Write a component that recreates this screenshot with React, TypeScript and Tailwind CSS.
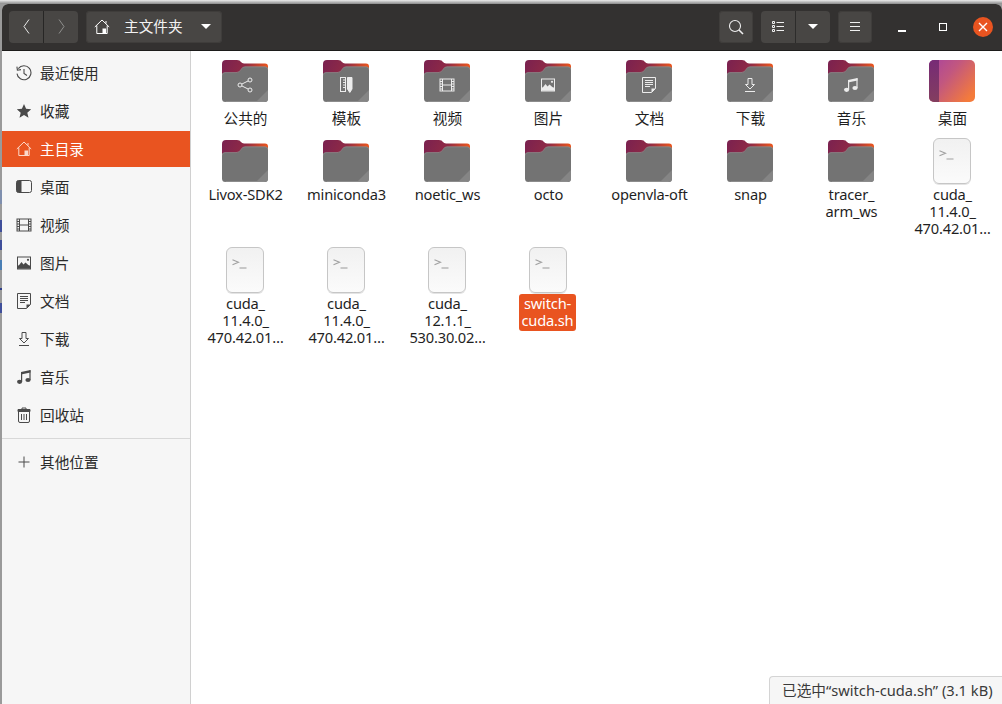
import React from "react";

const G = ({ children, cls = "" }: { children: React.ReactNode; cls?: string }) => (
  <svg viewBox="0 0 16 16" className={cls} fill="currentColor">{children}</svg>
);

const HomeI = ({ cls = "" }: { cls?: string }) => (
  <svg viewBox="0 0 16 16" className={cls} fill="none" stroke="currentColor" strokeWidth="1">
    <path d="M0.8 8 L8 1 L15.2 8" />
    <path d="M2.8 6.5 V14.5 H13.2 V6.5" />
    <path d="M12 2 V4.5" />
    <rect x="8.5" y="9.5" width="3.6" height="5" fill="currentColor" stroke="none" />
  </svg>
);
const ClockI = ({ cls = "" }: { cls?: string }) => (
  <svg viewBox="0 0 16 16" className={cls} fill="none" stroke="currentColor" strokeWidth="1.1">
    <path d="M2.3 3.6 A7 7 0 1 1 1 8.6" />
    <path d="M0.9 1.6 L1.4 5.2 L5 4.6" />
    <path d="M8 4 V8.5 L11 10.5" />
  </svg>
);
const StarI = ({ cls = "" }: { cls?: string }) => (
  <G cls={cls}><path d="M8 1 L10.1 5.8 L15.2 6.3 L11.3 9.7 L12.5 14.8 L8 12.1 L3.5 14.8 L4.7 9.7 L0.8 6.3 L5.9 5.8 Z" /></G>
);
const DesktopI = ({ cls = "" }: { cls?: string }) => (
  <svg viewBox="0 0 16 16" className={cls} fill="none" stroke="currentColor" strokeWidth="1">
    <rect x="0.5" y="1.5" width="15" height="12" rx="2" />
    <path d="M2.5 1.5 H5.5 V13.5 H2.5 A2 2 0 0 1 0.5 11.5 V3.5 A2 2 0 0 1 2.5 1.5 Z" fill="currentColor" stroke="none" />
  </svg>
);
const FilmI = ({ cls = "" }: { cls?: string }) => (
  <svg viewBox="0 0 16 16" className={cls} fill="none" stroke="currentColor" strokeWidth="1">
    <rect x="1" y="2" width="14" height="12" />
    <path d="M3.5 2 V14 M12.5 2 V14 M3.5 8 H12.5" />
    <path d="M1 4.5 H3.5 M1 7 H3.5 M1 9.5 H3.5 M1 12 H3.5 M12.5 4.5 H15 M12.5 7 H15 M12.5 9.5 H15 M12.5 12 H15" />
  </svg>
);
const PictureI = ({ cls = "" }: { cls?: string }) => (
  <G cls={cls}>
    <path fillRule="evenodd" d="M1 1.5 H15 V14.5 H1 Z M2 2.5 V13.5 H14 V2.5 Z" />
    <path d="M2 13.5 V11.5 L5.5 7 L7.5 9.5 L9.5 7.5 L14 11.5 V13.5 Z" />
    <path d="M2 10.5 H14 V13.5 H2 Z" />
    <circle cx="12" cy="4.8" r="1.1" />
  </G>
);
const DocI = ({ cls = "" }: { cls?: string }) => (
  <svg viewBox="0 0 16 16" className={cls} fill="none" stroke="currentColor" strokeWidth="1">
    <path d="M1.5 0.5 H14.5 V11.5 L10.5 15.5 H1.5 Z" />
    <path d="M4 3.5 H12 M4 5.5 H12 M4 7.5 H12 M4 9.5 H9" />
    <path d="M10.5 15.5 V11.5 H14.5 Z" fill="currentColor" stroke="none" />
  </svg>
);
const DownI = ({ cls = "" }: { cls?: string }) => (
  <svg viewBox="0 0 16 16" className={cls} fill="none" stroke="currentColor" strokeWidth="1">
    <path d="M6 1.5 H10 V7.5 H12.5 L8 12 L3.5 7.5 H6 Z" />
    <path d="M3 14.5 H13" />
  </svg>
);
const NoteI = ({ cls = "" }: { cls?: string }) => (
  <G cls={cls}>
    <path d="M5 3 L14.5 1 V3.5 L6.2 5.2 V12.5 H5 Z" />
    <path d="M13.4 1.2 H14.6 V11 H13.4 Z" />
    <ellipse cx="3.6" cy="12.8" rx="2.6" ry="2.1" />
    <ellipse cx="12" cy="11" rx="2.6" ry="2.1" />
  </G>
);
const TrashI = ({ cls = "" }: { cls?: string }) => (
  <svg viewBox="0 0 16 16" className={cls} fill="none" stroke="currentColor" strokeWidth="1">
    <path d="M2.5 4.5 V14 A1.5 1.5 0 0 0 4 15.5 H12 A1.5 1.5 0 0 0 13.5 14 V4.5" />
    <path d="M2 2.5 H14 V4.5 H2 Z" fill="currentColor" />
    <path d="M6 2.5 V1 H10 V2.5" />
    <path d="M5.5 7 V13 M8 7 V13 M10.5 7 V13" />
  </svg>
);
const PlusI = ({ cls = "" }: { cls?: string }) => (
  <svg viewBox="0 0 16 16" className={cls} fill="none" stroke="currentColor" strokeWidth="1">
    <path d="M8 2.5 V13.5 M2.5 8 H13.5" />
  </svg>
);
const ShareI = ({ cls = "" }: { cls?: string }) => (
  <svg viewBox="0 0 16 16" className={cls} fill="none" stroke="currentColor" strokeWidth="1">
    <circle cx="3" cy="8" r="2" /><circle cx="13" cy="3" r="2" /><circle cx="13" cy="13" r="2" />
    <path d="M4.8 7.1 L11.2 3.9 M4.8 8.9 L11.2 12.1" />
  </svg>
);
const RulerI = ({ cls = "" }: { cls?: string }) => (
  <svg viewBox="0 0 16 16" className={cls} fill="none" stroke="currentColor" strokeWidth="1">
    <rect x="2.5" y="0.5" width="5" height="14" />
    <path d="M5 3 H7.5 M5 5.5 H7.5 M5 8 H7.5 M5 10.5 H7.5" />
    <path d="M9.5 0.5 H14 V12 L11.8 15.5 L9.5 12 Z" fill="currentColor" />
  </svg>
);

const folderGlyphs: Record<string, (p: { cls?: string }) => React.ReactElement> = {
  share: ShareI, ruler: RulerI, film: FilmI, pic: PictureI, doc: DocI, down: DownI, note: NoteI,
};

const Folder = ({ id, glyph }: { id: number; glyph?: string }) => {
  const Gl = glyph ? folderGlyphs[glyph] : null;
  return (
    <div className="relative w-[46px] h-[42px]">
      <svg viewBox="0 0 46 42" className="block w-[46px] h-[42px]">
        <defs>
          <linearGradient id={`b${id}`} x1="0" y1="0" x2="1" y2="0.15">
            <stop offset="0" stopColor="#7a2150" />
            <stop offset="0.55" stopColor="#8f2a45" />
            <stop offset="1" stopColor="#e9551f" />
          </linearGradient>
        </defs>
        <path d="M0 16 V4 Q0 0 4 0 H15 Q18 0 19 2 Q20 3.4 22 3.4 H43 Q46 3.4 46 6.4 V16 Z" fill={`url(#b${id})`} />
        <path d="M0 38.5 V15.5 Q0 12.6 3 12.6 H14 Q17.5 12.6 19 9.5 Q20.4 6.8 23 6.8 H43 Q46 6.8 46 9.8 V38.5 Q46 42 42.5 42 H3.5 Q0 42 0 38.5 Z" fill="#737373" />
        <path d="M0 15.5 Q0 12.6 3 12.6 H14 Q17.5 12.6 19 9.5 Q20.4 6.8 23 6.8 H43 Q46 6.8 46 9.8" fill="none" stroke="#8f8f8f" strokeWidth="0.7" />
        <path d="M46 30 V38.5 Q46 42 42.5 42 H34 Z" fill="#858585" />
        <path d="M3.5 41.5 H42.5" stroke="#8c8c8c" strokeWidth="1" />
      </svg>
      {Gl && (
        <div className="absolute left-[15px] top-[17px] text-[#ececec]">
          <Gl cls="block w-[16px] h-[16px]" />
        </div>
      )}
    </div>
  );
};

const DesktopFolder = () => (
  <svg viewBox="0 0 46 42" className="block w-[46px] h-[42px]">
    <defs>
      <linearGradient id="dk" x1="0" y1="0" x2="1" y2="0.75">
        <stop offset="0" stopColor="#a8439f" />
        <stop offset="0.45" stopColor="#c2577f" />
        <stop offset="1" stopColor="#f47b3b" />
      </linearGradient>
      <linearGradient id="dl" x1="0" y1="0" x2="0" y2="1">
        <stop offset="0" stopColor="#772b76" />
        <stop offset="1" stopColor="#833e5f" />
      </linearGradient>
    </defs>
    <rect width="46" height="42" rx="5" fill="url(#dk)" />
    <path d="M5 0 H10 V42 H5 A5 5 0 0 1 0 37 V5 A5 5 0 0 1 5 0 Z" fill="url(#dl)" />
  </svg>
);

const ScriptFile = () => (
  <div className="w-[38px] h-[46px] rounded-[6px] border border-[#c6c6c6] bg-gradient-to-b from-[#f1f1f1] to-[#fbfbfb] pl-[5px] pt-[11px] shadow-[0_1px_0_#e4e4e4]">
    <svg viewBox="0 0 15 10" className="block w-[15px] h-[10px]" fill="none" stroke="#a0a0a0" strokeWidth="1.1">
      <path d="M0.5 0.8 L6.5 3.3 L0.5 5.8" />
      <path d="M7.5 9 H14.5" />
    </svg>
  </div>
);

type Item = { name: string[]; kind: "folder" | "file" | "desktop"; glyph?: string; selected?: boolean };

const items: Item[] = [
  { name: ["公共的"], kind: "folder", glyph: "share" },
  { name: ["模板"], kind: "folder", glyph: "ruler" },
  { name: ["视频"], kind: "folder", glyph: "film" },
  { name: ["图片"], kind: "folder", glyph: "pic" },
  { name: ["文档"], kind: "folder", glyph: "doc" },
  { name: ["下载"], kind: "folder", glyph: "down" },
  { name: ["音乐"], kind: "folder", glyph: "note" },
  { name: ["桌面"], kind: "desktop" },
  { name: ["Livox-SDK2"], kind: "folder" },
  { name: ["miniconda3"], kind: "folder" },
  { name: ["noetic_ws"], kind: "folder" },
  { name: ["octo"], kind: "folder" },
  { name: ["openvla-oft"], kind: "folder" },
  { name: ["snap"], kind: "folder" },
  { name: ["tracer_", "arm_ws"], kind: "folder" },
  { name: ["cuda_", "11.4.0_", "470.42.01…"], kind: "file" },
  { name: ["cuda_", "11.4.0_", "470.42.01…"], kind: "file" },
  { name: ["cuda_", "11.4.0_", "470.42.01…"], kind: "file" },
  { name: ["cuda_", "12.1.1_", "530.30.02…"], kind: "file" },
  { name: ["switch-", "cuda.sh"], kind: "file", selected: true },
];

const side = [
  { l: "最近使用", I: ClockI },
  { l: "收藏", I: StarI },
  { l: "主目录", I: HomeI, active: true },
  { l: "桌面", I: DesktopI },
  { l: "视频", I: FilmI },
  { l: "图片", I: PictureI },
  { l: "文档", I: DocI },
  { l: "下载", I: DownI },
  { l: "音乐", I: NoteI },
  { l: "回收站", I: TrashI },
];

const SideRow = ({ l, I, active }: { l: string; I: (p: { cls?: string }) => React.ReactElement; active?: boolean }) => (
  <div className={`h-[36px] mb-[2px] flex items-center pl-[14px] ${active ? "bg-[#e95420] text-white" : "text-[#2b2b2b]"}`}>
    <div className={active ? "text-[#fbd9cb]" : "text-[#4a4a4a]"}><I cls="block w-[16px] h-[16px]" /></div>
    <span className="ml-[8px]">{l}</span>
  </div>
);

const btn = "h-[32px] bg-[#484644] rounded-[4px] flex items-center justify-center shadow-[inset_0_0_0_1px_#3f3d3b]";

export default function App() {
  return (
    <div
      className="relative w-[1002px] h-[704px] overflow-hidden bg-[#9a9a9a] pl-[2px] pt-[4px] text-[14.67px] leading-[17px]"
      style={{ fontFamily: '"Noto Sans", "Noto Sans CJK SC", sans-serif' }}
    >
      <div className="absolute left-0 top-0 w-full h-[4px] bg-gradient-to-b from-[#ececec] to-[#8a8a8a]" />
      <svg className="absolute left-0 top-0 w-[2px] h-[704px]" viewBox="0 0 2 704">
        <rect y="190" width="2" height="14" fill="#7f8fae" />
        <rect y="220" width="2" height="12" fill="#3f4f9a" />
        <rect y="240" width="2" height="10" fill="#3f4f9a" />
        <rect y="260" width="2" height="10" fill="#4a7fb5" />
        <rect y="288" width="2" height="2" fill="#2f3f8a" />
        <rect y="303" width="2" height="10" fill="#3f4f9a" />
      </svg>
      <div className="relative flex flex-col h-[700px] w-[1000px] rounded-t-[6px] overflow-hidden bg-white">
        <header className="h-[47px] shrink-0 bg-[#333130] border-b border-[#1c1b1a] flex items-center pl-[7px] pb-[1px] text-white">
          <div className="flex w-[69px] h-[32px] rounded-[4px] overflow-hidden">
            <div className="w-[35px] bg-[#484644] border-r border-[#272625] flex items-center justify-center">
              <svg viewBox="0 0 7 15" className="w-[7px] h-[15px]" fill="none" stroke="#e8e8e8" strokeWidth="1">
                <path d="M6 0.5 L1 7.5 L6 14.5" />
              </svg>
            </div>
            <div className="flex-1 bg-[#484644] flex items-center justify-center">
              <svg viewBox="0 0 7 15" className="w-[7px] h-[15px]" fill="none" stroke="#8f8e8d" strokeWidth="1">
                <path d="M1 0.5 L6 7.5 L1 14.5" />
              </svg>
            </div>
          </div>
          <div className={`${btn} w-[136px] ml-[8px] justify-start pl-[8px]`}>
            <HomeI cls="w-[16px] h-[16px] text-white" />
            <span className="ml-[14px] text-[#f2f2f2]">主文件夹</span>
            <span className="ml-[18px] w-0 h-0 border-x-[5px] border-x-transparent border-t-[5px] border-t-white" />
          </div>
          <div className={`${btn} w-[34px] ml-auto`}>
            <svg viewBox="0 0 16 16" className="w-[16px] h-[16px]" fill="none" stroke="#f0f0f0" strokeWidth="1.1">
              <circle cx="7" cy="7" r="5.5" /><path d="M11 11 L15 15" strokeWidth="1.6" />
            </svg>
          </div>
          <div className="flex w-[69px] h-[32px] ml-[8px] rounded-[4px] overflow-hidden">
            <div className="w-[35px] bg-[#484644] border-r border-[#2d2c2b] flex items-center justify-center">
              <svg viewBox="0 0 12 12" className="w-[12px] h-[12px]" fill="none" stroke="#f0f0f0" strokeWidth="1">
                <path d="M0.5 0.5 H2.5 V2.5 H0.5 Z M0.5 4.5 H2.5 V6.5 H0.5 Z M0.5 8.5 H2.5 V10.5 H0.5 Z M4.5 1.5 H12 M4.5 5.5 H12 M4.5 9.5 H12" />
              </svg>
            </div>
            <div className="flex-1 bg-[#484644] flex items-center justify-center">
              <span className="w-0 h-0 border-x-[5px] border-x-transparent border-t-[5px] border-t-white" />
            </div>
          </div>
          <div className={`${btn} w-[34px] ml-[8px]`}>
            <svg viewBox="0 0 12 10" className="w-[12px] h-[10px]" fill="none" stroke="#f0f0f0" strokeWidth="1">
              <path d="M1 0.5 H11 M1 4.5 H11 M1 8.5 H11" />
            </svg>
          </div>
          <div className="w-[8px] h-[1.5px] bg-white ml-[26px] mt-[9px]" />
          <div className="w-[6px] h-[6px] border border-white ml-[33px] box-content" />
          <div className="w-[20px] h-[20px] rounded-full bg-[#e95420] ml-[26px] mr-[9px] flex items-center justify-center">
            <svg viewBox="0 0 10 10" className="w-[10px] h-[10px]" fill="none" stroke="#fff" strokeWidth="1.4">
              <path d="M1 1 L9 9 M9 1 L1 9" />
            </svg>
          </div>
        </header>
        <div className="flex flex-1 min-h-0">
          <aside className="w-[189px] shrink-0 bg-[#f6f6f6] border-r border-[#d0d0d0] pt-[4px]">
            {side.map((s) => <SideRow key={s.l} {...s} />)}
            <div className="h-px bg-[#d8d8d8] mt-[5px] mb-[5px]" />
            <SideRow l="其他位置" I={PlusI} />
          </aside>
          <main className="flex-1 bg-white pl-[3px] pt-[7px]">
            <div className="grid grid-cols-[repeat(8,101px)] grid-rows-[80px_109px_auto] justify-start">
              {items.map((it, i) => (
                <div key={i} className="flex flex-col items-center text-center text-[#1f1f1f]">
                  <div className="h-[46px] flex items-center justify-center">
                    {it.kind === "folder" && <Folder id={i} glyph={it.glyph} />}
                    {it.kind === "desktop" && <DesktopFolder />}
                    {it.kind === "file" && <ScriptFile />}
                  </div>
                  <div
                    className={
                      i < 8
                        ? "mt-[6px] ml-[2px]"
                        : it.selected
                          ? "mt-px bg-[#e95420] text-white rounded-[3px] px-[3px] pt-px pb-[2px] tracking-[-0.2px]"
                          : "mt-[2px] ml-[2px] tracking-[-0.2px]"
                    }
                  >
                    {it.name.map((n, j) => <div key={j}>{n}</div>)}
                  </div>
                </div>
              ))}
            </div>
          </main>
        </div>
      </div>
      <div className="absolute right-0 bottom-0 w-[233px] h-[28px] bg-[#f6f6f6] border-t border-l border-[#d4d4d4] rounded-tl-[4px] pl-[12px] flex items-center text-[#3a3a3a] whitespace-nowrap">
        已选中“switch-cuda.sh” (3.1 kB)
      </div>
    </div>
  );
}
